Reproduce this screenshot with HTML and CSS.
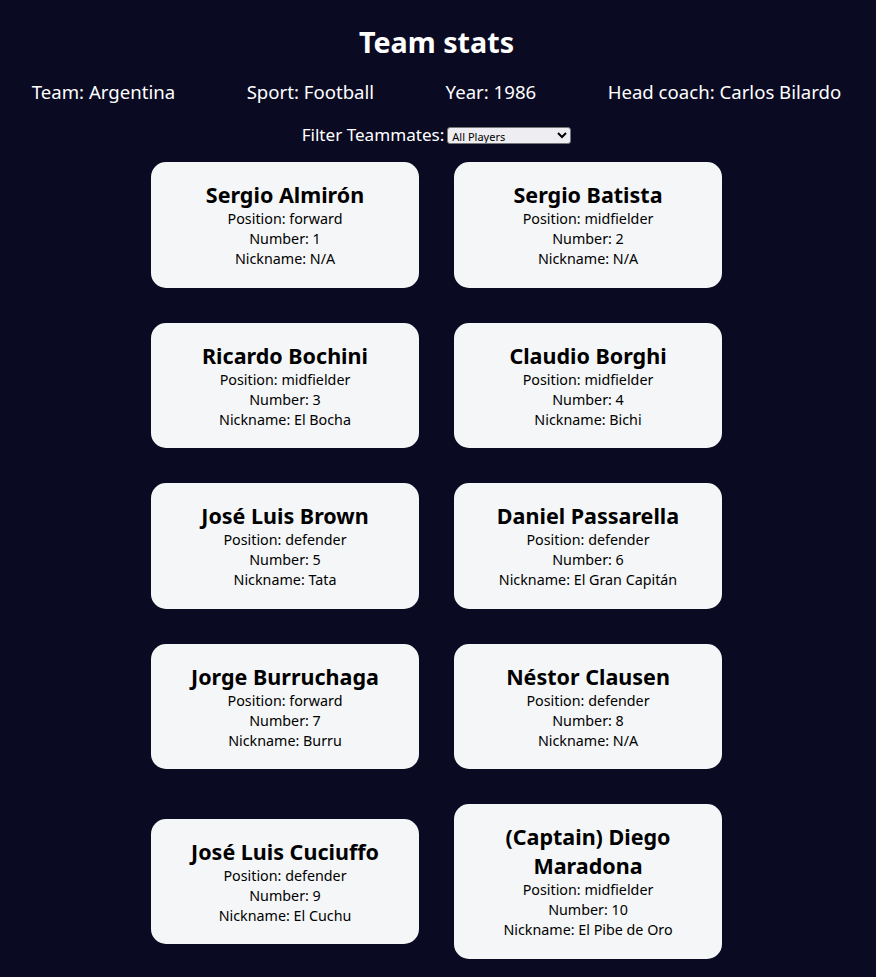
FILE: index.html
```html
<!DOCTYPE html>
<html lang="en">
<head>
<meta charset="utf-8">
<title>Team stats</title>
<link rel="stylesheet" href="styles.css">
</head>
<body>
<header class="title-container">
  <h1 class="title">Team stats</h1>
  <div class="team-stats">
    <p>Team: <span>Argentina</span></p>
    <p>Sport: <span>Football</span></p>
    <p>Year: <span>1986</span></p>
    <p>Head coach: <span>Carlos Bilardo</span></p>
  </div>
</header>
<main>
  <div class="filter">
    <label class="options-label" for="players">Filter Teammates:</label>
    <select id="players" class="players">
      <option value="all">All Players</option>
      <option value="nickname">Nicknames</option>
      <option value="forward">Position Forward</option>
      <option value="midfielder">Position Midfielder</option>
      <option value="defender">Position Defender</option>
      <option value="goalkeeper">Position Goalkeeper</option>
    </select>
  </div>
  <div class="player-cards">
    <div class="player-card"><h2>Sergio Almirón</h2><p>Position: forward</p><p>Number: 1</p><p>Nickname: N/A</p></div>
    <div class="player-card"><h2>Sergio Batista</h2><p>Position: midfielder</p><p>Number: 2</p><p>Nickname: N/A</p></div>
    <div class="player-card"><h2>Ricardo Bochini</h2><p>Position: midfielder</p><p>Number: 3</p><p>Nickname: El Bocha</p></div>
    <div class="player-card"><h2>Claudio Borghi</h2><p>Position: midfielder</p><p>Number: 4</p><p>Nickname: Bichi</p></div>
    <div class="player-card"><h2>José Luis Brown</h2><p>Position: defender</p><p>Number: 5</p><p>Nickname: Tata</p></div>
    <div class="player-card"><h2>Daniel Passarella</h2><p>Position: defender</p><p>Number: 6</p><p>Nickname: El Gran Capitán</p></div>
    <div class="player-card"><h2>Jorge Burruchaga</h2><p>Position: forward</p><p>Number: 7</p><p>Nickname: Burru</p></div>
    <div class="player-card"><h2>Néstor Clausen</h2><p>Position: defender</p><p>Number: 8</p><p>Nickname: N/A</p></div>
    <div class="player-card"><h2>José Luis Cuciuffo</h2><p>Position: defender</p><p>Number: 9</p><p>Nickname: El Cuchu</p></div>
    <div class="player-card"><h2>(Captain) Diego Maradona</h2><p>Position: midfielder</p><p>Number: 10</p><p>Nickname: El Pibe de Oro</p></div>
  </div>
</main>
</body>
</html>
```
FILE: styles.css
```css
*, *::before, *::after {
  box-sizing: border-box;
}

body {
  margin: 0;
  padding: 0 3px 0 0;
  background-color: #0a0a23;
  text-align: center;
  font-family: "Noto Sans", "Open Sans", sans-serif;
  color: #ffffff;
}

.title {
  margin: 20px 0 0;
  font-size: 28.7px;
  line-height: 44px;
  font-weight: 700;
}

.team-stats {
  display: flex;
  justify-content: space-around;
  margin: 15px -4px 0;
  font-size: 18.6px;
  line-height: 25px;
}

.team-stats p {
  margin: 0;
}

.filter {
  margin-top: 18px;
  display: flex;
  justify-content: center;
  align-items: center;
  gap: 3px;
  height: 25px;
}

.options-label {
  font-size: 17.1px;
  line-height: 25px;
}

.players {
  width: 124px;
  height: 17px;
  font-family: "Noto Sans", sans-serif;
  font-size: 11px;
  margin-top: 2px;
  padding: 0;
  background: #ededf2;
  color: #000;
  border: 1px solid #767676;
  border-radius: 3px;
}

.player-cards {
  width: 571px;
  margin: 15px auto 0;
  display: flex;
  flex-wrap: wrap;
  align-items: center;
  gap: 35px;
}

.player-card {
  width: 268px;
  padding: 18.25px 12px;
  background-color: #f5f6f7;
  border-radius: 15px;
  color: #000;
}

.player-card h2 {
  margin: 0;
  font-size: 21.5px;
  line-height: 29px;
  font-weight: 700;
}

.player-card p {
  margin: 0;
  font-size: 14.3px;
  line-height: 20px;
}
```
